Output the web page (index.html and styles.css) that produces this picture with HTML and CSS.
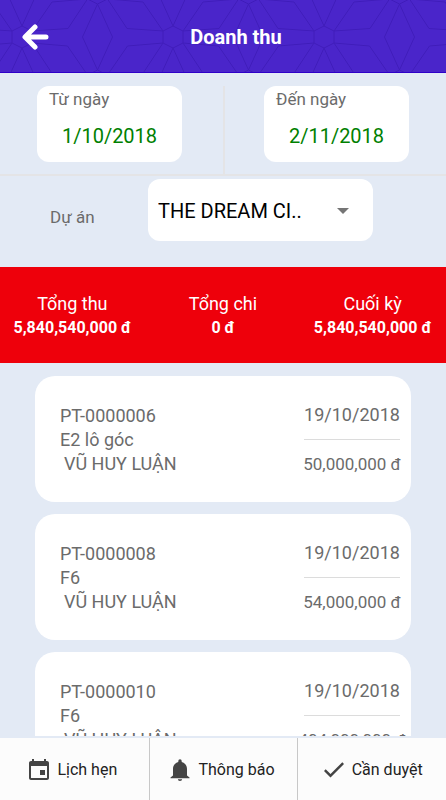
FILE: index.html
```html
<!DOCTYPE html>
<html lang="vi">
<head>
<meta charset="utf-8">
<meta name="viewport" content="width=device-width, initial-scale=1">
<title>Doanh thu</title>
<link rel="stylesheet" href="styles.css">
</head>
<body>
<header class="topbar">
  <svg class="topbar-pattern" aria-hidden="true">
    <defs>
      <g id="flower">
        <path d="M0-11 10-6V6L0 11-10 6V-6Z"/>
        <path d="M0-11-15-44 0-77 15-44Z"/>
        <path d="M-10-6-46-8.500-65.500-38-30-35Z"/>
        <path d="M10-6 46-8.500 65.500-38 30-35Z"/>
      </g>
      <pattern id="lattice" x="22" y="37" width="151" height="88" patternUnits="userSpaceOnUse">
        <g class="lattice-lines">
          <use href="#flower" x="0" y="0"/>
          <use href="#flower" x="151" y="0"/>
          <use href="#flower" x="75.5" y="44"/>
          <use href="#flower" x="0" y="88"/>
          <use href="#flower" x="151" y="88"/>
          <use href="#flower" x="75.5" y="132"/>
        </g>
      </pattern>
    </defs>
    <rect width="100%" height="100%" fill="url(#lattice)"/>
  </svg>
  <button class="back" type="button" aria-label="Back">
    <svg width="28" height="26" viewBox="0 0 28 26" aria-hidden="true"><path d="M14 3 4 13 14 23M4.500 13H25"/></svg>
  </button>
  <h1 class="title">Doanh thu</h1>
</header>

<form class="filters">
  <div class="dates">
    <div class="date-cell">
      <div class="date-box">
        <label for="from">Từ ngày</label>
        <input id="from" type="text" value="1/10/2018">
      </div>
    </div>
    <div class="date-cell">
      <div class="date-box">
        <label for="to">Đến ngày</label>
        <input id="to" type="text" value="2/11/2018">
      </div>
    </div>
  </div>
  <div class="project">
    <label for="project">Dự án</label>
    <div class="select-box">
      <select id="project"><option>THE DREAM CI..</option></select>
      <svg class="caret" width="12" height="6" viewBox="0 0 12 6" aria-hidden="true"><path d="M0 0H12L6 6Z"/></svg>
    </div>
  </div>
</form>

<section class="totals">
  <div class="total"><span>Tổng thu</span><strong>5,840,540,000 đ</strong></div>
  <div class="total"><span>Tổng chi</span><strong>0 đ</strong></div>
  <div class="total"><span>Cuối kỳ</span><strong>5,840,540,000 đ</strong></div>
</section>

<main class="list">
  <article class="card">
    <div class="info"><span>PT-0000006</span><span>E2 lô góc</span><span class="person">VŨ HUY LUẬN</span></div>
    <div class="payment"><span class="day">19/10/2018</span><span class="amount">50,000,000 đ</span></div>
  </article>
  <article class="card">
    <div class="info"><span>PT-0000008</span><span>F6</span><span class="person">VŨ HUY LUẬN</span></div>
    <div class="payment"><span class="day">19/10/2018</span><span class="amount">54,000,000 đ</span></div>
  </article>
  <article class="card">
    <div class="info"><span>PT-0000010</span><span>F6</span><span class="person">VŨ HUY LUẬN</span></div>
    <div class="payment"><span class="day">19/10/2018</span><span class="amount">404,000,000 đ</span></div>
  </article>
</main>

<nav class="tabs">
  <button class="tab" type="button">
    <svg width="24" height="24" viewBox="0 0 24 24" aria-hidden="true"><path d="M18 12h-5v5h5v-5zM17 1v2H7V1H5v2H4c-1.100 0-2 .9-2 2v15c0 1.100.9 2 2 2h16c1.100 0 2-.9 2-2V5c0-1.100-.9-2-2-2h-1V1h-2zm3 19H4V8h16v12z"/></svg>
    Lịch hẹn
  </button>
  <button class="tab" type="button">
    <svg width="24" height="24" viewBox="0 0 24 24" aria-hidden="true"><path d="M12 23c1.200 0 2.100-.8 2.100-1.700H9.900C9.900 22.200 10.800 23 12 23zM19 17.500V11c0-3.500-2.100-6.200-5.300-7V3a1.700 1.700 0 0 0-3.400 0v1C7.100 4.800 5 7.500 5 11v6.500l-2.500 2V20.300h19v-.8z"/></svg>
    Thông báo
  </button>
  <button class="tab" type="button">
    <svg width="24" height="24" viewBox="0 0 24 24" aria-hidden="true"><path d="M8.500 16 3.700 11.200 2 12.900 8.500 19.400 22 5.900 20.300 4.200z"/></svg>
    Cần duyệt
  </button>
</nav>
</body>
</html>
```
FILE: styles.css
```css
* {
  box-sizing: border-box;
}

body {
  margin: 0;
  height: 100vh;
  display: flex;
  flex-direction: column;
  overflow: hidden;
  background: #e3eaf5;
  color: #6b6b6b;
  font: 17px/24px Roboto, "Noto Sans", sans-serif;
}

button,
input,
select {
  font: inherit;
  border: 0;
  background: none;
  padding: 0;
  margin: 0;
}

.topbar {
  position: relative;
  display: grid;
  grid-template-columns: 48px 1fr 22px;
  align-items: center;
  height: 73px;
  padding: 1px 12px 0;
  background: #4a25ca;
  border-bottom: 1px solid #2f00c8;
  color: #fff;
}

.topbar-pattern {
  position: absolute;
  inset: 0;
  width: 100%;
  height: 100%;
}

.lattice-lines {
  fill: none;
  stroke: #3f1cba;
  stroke-width: 1;
}

.back {
  position: relative;
  display: flex;
  padding-left: 9px;
}

.back path {
  fill: none;
  stroke: #fff;
  stroke-width: 5;
  stroke-linecap: round;
  stroke-linejoin: round;
}

.title {
  position: relative;
  margin: 0;
  text-align: center;
  font-size: 20px;
  font-weight: 700;
}

.dates {
  display: grid;
  grid-template-columns: 1fr 1fr;
  padding-top: 13px;
  border-bottom: 2px solid #e4e4e6;
}

.date-cell {
  padding: 0 41px 12px 37px;
}

.date-cell + .date-cell {
  border-left: 2px solid #e4e4e6;
  padding: 0 37px 12px 39px;
}

.date-box {
  display: flex;
  flex-direction: column;
  height: 76px;
  padding: 1px 12px;
  border-radius: 12px;
  background: #fff;
}

.date-box input {
  width: 100%;
  margin-top: 13px;
  color: #008000;
  font-size: 20px;
  text-align: center;
}

.project {
  display: flex;
  align-items: center;
  padding: 3px 73px 26px 50px;
}

.project label {
  flex: 1;
  padding-top: 13px;
}

.select-box {
  position: relative;
  flex: 0 0 225px;
  height: 62px;
  border-radius: 12px;
  background: #fff;
}

.select-box select {
  appearance: none;
  width: 100%;
  height: 100%;
  padding: 2px 10px 0;
  color: #000;
  font-size: 20px;
}

.caret {
  position: absolute;
  right: 24px;
  top: 29px;
  fill: #757575;
  pointer-events: none;
}

.totals {
  display: grid;
  grid-template-columns: 1fr 1fr 1fr;
  padding: 25px 0 24px;
  background: #ee000b;
  color: #fff;
  text-align: center;
}

.total {
  display: flex;
  flex-direction: column;
  font-size: 18px;
}

.total:first-child {
  padding-right: 4px;
}

.total:last-child {
  padding-left: 2px;
}

.total strong {
  font-size: 16px;
  line-height: 23px;
  white-space: nowrap;
}

.list {
  flex: 1;
  min-height: 0;
  display: flex;
  flex-direction: column;
  gap: 12px;
  margin-bottom: 2px;
  padding: 13px 35px 0;
  overflow-y: auto;
  scrollbar-width: none;
}

.card {
  flex: none;
  display: flex;
  justify-content: space-between;
  padding: 27px 11px 26px 25px;
  border-radius: 20px;
  background: #fff;
}

.info {
  display: flex;
  flex-direction: column;
  padding-top: 1px;
  font-size: 18px;
}

.person {
  padding-left: 4px;
}

.payment {
  width: 96px;
}

.day,
.amount {
  display: flex;
  justify-content: center;
  white-space: nowrap;
}

.day {
  padding-bottom: 12px;
  border-bottom: 1px solid #dcdcdc;
  font-size: 18px;
}

.amount {
  padding-top: 12px;
}

.tabs {
  display: grid;
  grid-template-columns: 1fr 1fr 1fr;
  height: 62px;
  background: #fcfcfc;
}

.tab {
  display: flex;
  align-items: center;
  justify-content: center;
  gap: 6px;
  padding: 2px 4px 0 0;
  color: #222;
  font-size: 16px;
}

.tab:last-child {
  padding-right: 0;
}

.tab + .tab {
  border-left: 1px solid #c8c8c8;
}

.tab svg {
  fill: #444;
}
```
